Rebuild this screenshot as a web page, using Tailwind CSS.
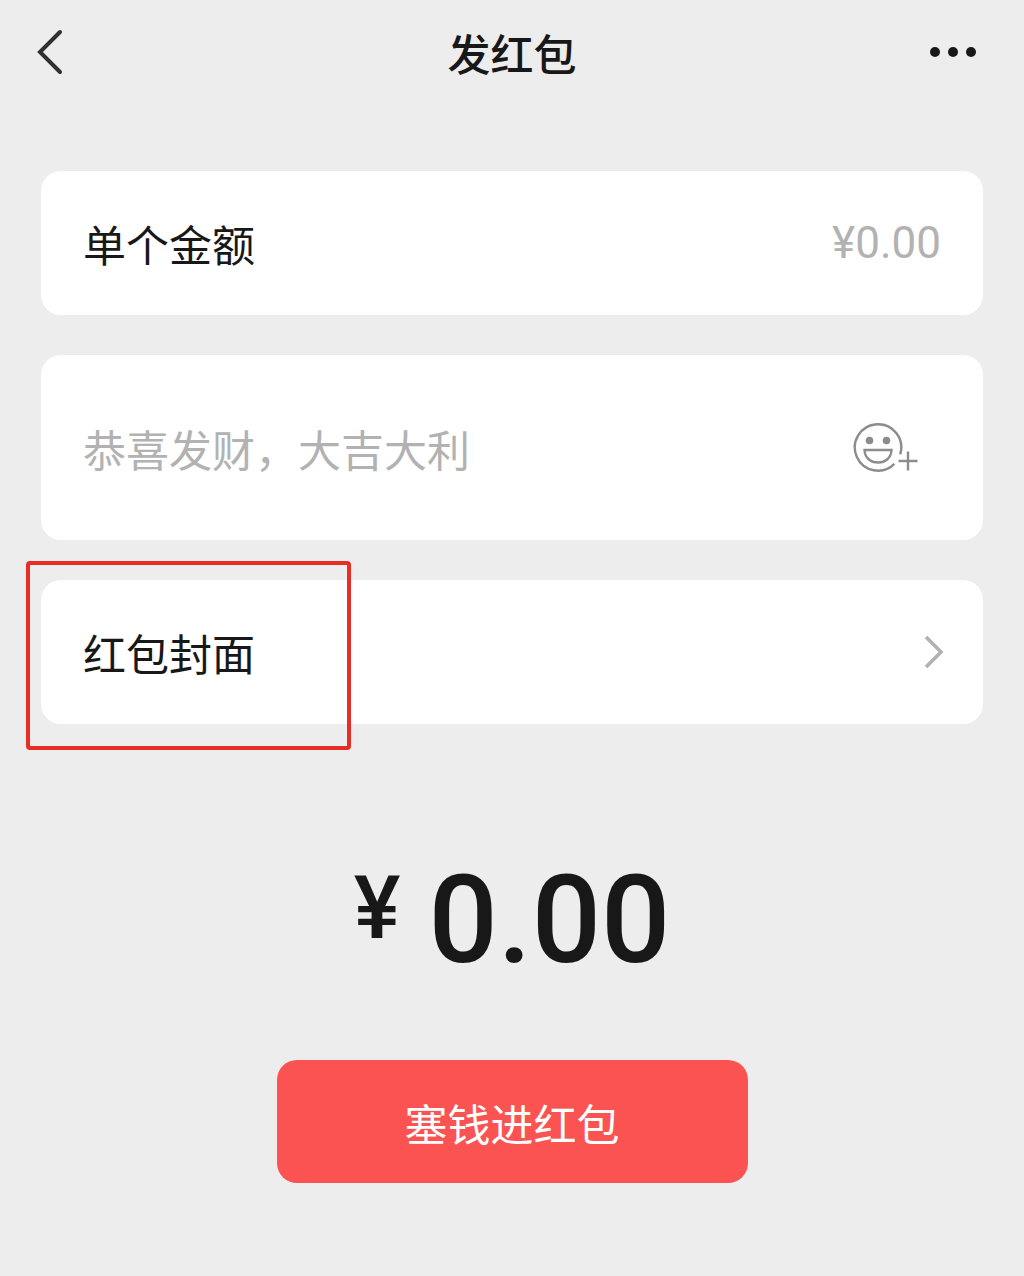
<!DOCTYPE html>
<html lang="zh-CN">
<head>
  <meta charset="UTF-8" />
  <meta name="viewport" content="width=device-width, initial-scale=1.0" />
  <title>发红包</title>
  <script src="https://cdn.jsdelivr.net/npm/@tailwindcss/browser@4"></script>
</head>
<body class="bg-[#ededed] min-h-screen text-[#181818] font-['Noto_Sans_CJK_SC',sans-serif]">
  <!-- Header -->
  <header class="grid grid-cols-3 items-center h-[103px] px-9">
    <button type="button" aria-label="返回" class="justify-self-start">
      <svg class="w-7 h-12" viewBox="0 0 28 48" fill="none" stroke="#303030" stroke-width="4" stroke-linecap="round">
        <path d="M24 4 4 24l20 20" />
      </svg>
    </button>
    <h1 class="text-[43px] leading-[64px] font-medium text-center">发红包</h1>
    <button type="button" aria-label="更多" class="justify-self-end pr-2">
      <svg class="w-[52px] h-3" viewBox="0 0 52 12" fill="#181818">
        <circle cx="7" cy="6" r="5" />
        <circle cx="25" cy="6" r="5" />
        <circle cx="43" cy="6" r="5" />
      </svg>
    </button>
  </header>

  <main class="px-[41px] pt-[68px]">
    <form class="flex flex-col gap-10" onsubmit="return false">
      <!-- Amount -->
      <div class="flex items-center justify-between h-36 px-[42px] bg-white rounded-[20px]">
        <label for="amount" class="text-[43px] leading-[64px] shrink-0">单个金额</label>
        <input id="amount" type="text" inputmode="decimal" placeholder="¥0.00"
          class="min-w-0 w-80 font-['Roboto',sans-serif] text-[44px] leading-[64px] text-right outline-none placeholder:text-[#b2b2b2]" />
      </div>

      <!-- Message -->
      <div class="flex items-center h-[185px] pl-[42px] pr-16 bg-white rounded-[20px]">
        <input id="message" type="text" aria-label="祝福语" placeholder="恭喜发财，大吉大利"
          class="min-w-0 flex-1 text-[43px] leading-[64px] outline-none placeholder:text-[#b2b2b2]" />
        <button type="button" aria-label="添加表情">
          <svg class="w-[68px] h-[52px]" viewBox="0 0 68 52" fill="none" stroke="#8c8c8c" stroke-width="2.4">
            <path d="M49.2 32.3A23.200 23.200 0 1 0 43.400 41.900" />
            <circle cx="18.5" cy="18.5" r="3.8" fill="#8c8c8c" stroke="none" />
            <circle cx="35.5" cy="18.5" r="3.8" fill="#8c8c8c" stroke="none" />
            <path d="M13.5 28h27c-.5 8-6 12.500-13.500 12.500S14 36 13.500 28z" />
            <path d="M47.500 39h19M57 29.500v19" />
          </svg>
        </button>
      </div>

      <!-- Cover -->
      <div class="relative">
        <button type="button" class="flex items-center justify-between w-full h-36 pl-[42px] pr-[39px] bg-white rounded-[20px]">
          <span class="text-[43px] leading-[64px]">红包封面</span>
          <svg class="w-5 h-9" viewBox="0 0 20 36" fill="none" stroke="#b2b2b2" stroke-width="3.6">
            <path d="M2 3l15 15L2 33" />
          </svg>
        </button>
        <div class="absolute -left-[15px] -top-[19px] w-[325px] h-[189px] border-4 border-[#e62e24] rounded-sm pointer-events-none"></div>
      </div>

      <!-- Total -->
      <p class="flex justify-center items-start gap-7 pt-[92px] font-['Roboto',sans-serif] font-medium">
        <span class="text-[88px] leading-[104px]">¥</span>
        <span class="text-[122px] leading-[130px]">0.00</span>
      </p>

      <button type="submit" class="self-center w-1/2 h-[123px] mt-[34px] bg-[#fa5351] rounded-[20px] text-white text-[43px] leading-[64px]">塞钱进红包</button>
    </form>
  </main>
</body>
</html>
